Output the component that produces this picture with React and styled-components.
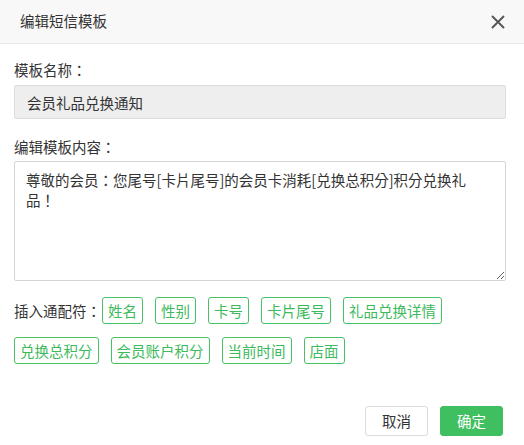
import React from "react";
import styled, { createGlobalStyle } from "styled-components";

const Global = createGlobalStyle`
  html, body { margin: 0; padding: 0; background: #fff; }
  body {
    font-family: "Noto Sans CJK SC", "Noto Sans", sans-serif;
    font-size: 14.5px;
    color: #333;
  }
  * { box-sizing: border-box; }
`;

const Dialog = styled.div`
  width: 524px;
  height: 445px;
  background: #fff;
  display: flex;
  flex-direction: column;
`;

const Header = styled.div`
  height: 44px;
  background: #f8f8f8;
  border-bottom: 1px solid #e8e8e8;
  display: flex;
  align-items: center;
  justify-content: space-between;
  padding: 0 19px 0 20px;
`;

const Title = styled.div`
  font-size: 14.5px;
  line-height: 20px;
  color: #333;
  margin-top: -1px;
`;

const Close = styled.button`
  width: 14px;
  height: 14px;
  border: 0;
  padding: 0;
  background: none;
  display: flex;
  cursor: pointer;
`;

const Body = styled.div`
  padding: 16px 18px 0 14px;
  display: flex;
  flex-direction: column;
`;

const Label = styled.div`
  line-height: 20px;
  color: #333;
  margin-bottom: ${(p) => p.$mb || 5}px;
`;

const Colon = styled.span`
  font-family: "Noto Sans CJK TC", "Noto Sans CJK SC", sans-serif;
`;

const NameInput = styled.input`
  width: 492px;
  height: 34px;
  border: 1px solid #dcdcdc;
  border-radius: 2px;
  background: #eeeeee;
  padding: 0 12px;
  font: inherit;
  font-size: 14.5px;
  color: #333;
  outline: none;
  margin-bottom: 18px;
`;

const Content = styled.textarea`
  width: 492px;
  height: 120px;
  border: 1px solid #d4d4d4;
  border-radius: 2px;
  padding: 8px 30px 8px 11px;
  font-family: "Noto Sans CJK TC", "Noto Sans CJK SC", sans-serif;
  font-size: 14.5px;
  line-height: 20px;
  color: #333;
  outline: none;
  resize: both;
  display: block;
  margin-bottom: 16px;
`;

const Wildcards = styled.div`
  display: flex;
  flex-wrap: wrap;
  align-items: center;
  row-gap: 13px;
`;

const WildLabel = styled.span`
  line-height: 27px;
  margin-right: 1px;
  color: #333;
`;

const Tag = styled.span`
  height: 27px;
  line-height: 25px;
  padding: 0 5px;
  border: 1px solid #46c165;
  border-radius: 3px;
  color: #3dba5b;
  margin-right: 12px;
  white-space: nowrap;
  cursor: pointer;
`;

const Footer = styled.div`
  margin-top: auto;
  display: flex;
  justify-content: flex-end;
  gap: 12px;
  padding: 0 21px 9px 0;
`;

const Btn = styled.button`
  height: 30px;
  padding: 0 16px;
  border-radius: 3px;
  font: inherit;
  font-size: 14.5px;
  line-height: 28px;
  cursor: pointer;
  border: 1px solid ${(p) => (p.$primary ? "#3fbf60" : "#dcdcdc")};
  background: ${(p) => (p.$primary ? "#3fbf60" : "#fff")};
  color: ${(p) => (p.$primary ? "#fff" : "#333")};
`;

const tags = [
  "姓名",
  "性别",
  "卡号",
  "卡片尾号",
  "礼品兑换详情",
  "兑换总积分",
  "会员账户积分",
  "当前时间",
  "店面",
];

export default function App() {
  return (
    <>
      <Global />
      <Dialog>
        <Header>
          <Title>编辑短信模板</Title>
          <Close aria-label="close">
            <svg width="14" height="14" viewBox="0 0 14 14">
              <path
                d="M1.5 1.5 L12.5 12.5 M12.5 1.5 L1.5 12.5"
                stroke="#555"
                strokeWidth="1.9"
                strokeLinecap="round"
                fill="none"
              />
            </svg>
          </Close>
        </Header>
        <Body>
          <Label>
            模板名称<Colon>：</Colon>
          </Label>
          <NameInput readOnly defaultValue="会员礼品兑换通知" />
          <Label $mb={4}>
            编辑模板内容<Colon>：</Colon>
          </Label>
          <Content defaultValue="尊敬的会员：您尾号[卡片尾号]的会员卡消耗[兑换总积分]积分兑换礼品！" />
          <Wildcards>
            <WildLabel>
              插入通配符<Colon>：</Colon>
            </WildLabel>
            {tags.map((t) => (
              <Tag key={t}>{t}</Tag>
            ))}
          </Wildcards>
        </Body>
        <Footer>
          <Btn>取消</Btn>
          <Btn $primary>确定</Btn>
        </Footer>
      </Dialog>
    </>
  );
}
